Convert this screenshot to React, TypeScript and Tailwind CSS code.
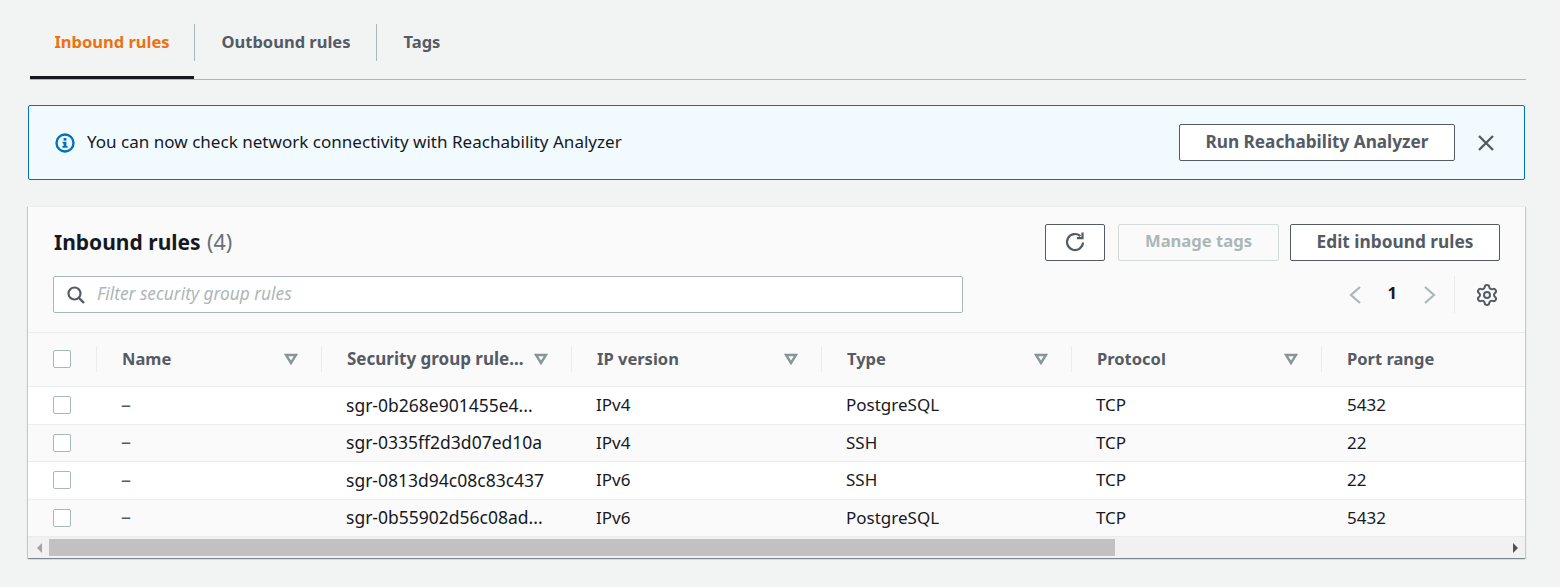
import { Settings } from "lucide-react";

const font = "font-['Noto_Sans',sans-serif]";

const columns = ["Name", "Security group rule...", "IP version", "Type", "Protocol", "Port range"];

const rows = [
  { id: "sgr-0b268e901455e4...", ip: "IPv4", type: "PostgreSQL", port: "5432" },
  { id: "sgr-0335ff2d3d07ed10a", ip: "IPv4", type: "SSH", port: "22" },
  { id: "sgr-0813d94c08c83c437", ip: "IPv6", type: "SSH", port: "22" },
  { id: "sgr-0b55902d56c08ad...", ip: "IPv6", type: "PostgreSQL", port: "5432" },
];

function Checkbox() {
  return <span className="block w-[18px] h-[18px] bg-white border border-[#aab7b8] rounded-[2px]" />;
}

function SortIcon() {
  return (
    <svg width="14" height="12" viewBox="0 0 14 12" className="shrink-0">
      <path d="M2 2h10L7 10z" fill="none" stroke="#879596" strokeWidth="2.4" strokeLinejoin="miter" />
    </svg>
  );
}

function Button({ children, className = "" }: { children: React.ReactNode; className?: string }) {
  return (
    <button className={`h-[37px] flex items-center justify-center bg-white border border-[#545b64] rounded-[2px] font-bold text-[#545b64] leading-[33px] pb-[2px] ${className}`}>
      {children}
    </button>
  );
}

export default function App() {
  return (
    <div className={`min-h-[587px] bg-[#f2f3f3] pt-[24px] pl-[28px] pr-[35px] overflow-hidden ${font}`}>
      {/* Tabs */}
      <div className="ml-[2px] mr-[-1px] h-[56px] flex border-b border-[#aab7b8] text-[16.5px] font-bold">
        <div className="relative w-[164px] h-[37px] flex items-center justify-center pb-px text-[#ec7211]">
          Inbound rules
          <span className="absolute left-0 right-0 top-[52px] h-[3px] bg-[#16191f]" />
        </div>
        <div className="w-[182px] h-[37px] flex items-center justify-center pl-[1px] pb-px border-l border-[#aab7b8] text-[#545b64]">
          Outbound rules
        </div>
        <div className="w-[91px] h-[37px] flex items-center justify-center pb-px border-l border-[#aab7b8] text-[#545b64]">
          Tags
        </div>
      </div>

      {/* Flash */}
      <div className="mt-[25px] h-[75px] flex items-center bg-[#f1faff] border border-[#0073bb] rounded-[2px] pl-[26px] pr-[29px]">
        <svg width="20" height="20" viewBox="0 0 20 20" className="shrink-0">
          <circle cx="10" cy="10" r="8.5" fill="none" stroke="#0073bb" strokeWidth="2.4" />
          <rect x="8.6" y="5" width="2.8" height="2.6" fill="#0073bb" />
          <path d="M7.6 8.8h3.8v4.2h1.2v1.8H7.4V13h1.2v-2.4h-1z" fill="#0073bb" />
        </svg>
        <span className="ml-[12px] pb-[2px] text-[17.06px] text-[#16191f]">You can now check network connectivity with Reachability Analyzer</span>
        <Button className="ml-auto w-[276px] text-[17.2px]">Run Reachability Analyzer</Button>
        <svg width="18" height="18" viewBox="0 0 18 18" className="ml-[22px] shrink-0">
          <path d="M2 2l14 14M16 2L2 16" stroke="#545b64" strokeWidth="2.4" />
        </svg>
      </div>

      {/* Table card */}
      <div className="mt-[26px] h-[352px] bg-[#fafafa] border-t border-[#eaeded] shadow-[0_1px_1px_0_rgba(0,28,36,0.3),1px_1px_1px_0_rgba(0,28,36,0.15),-1px_1px_1px_0_rgba(0,28,36,0.15)] overflow-hidden flex flex-col">
        <div className="h-[126px] shrink-0 pl-[25px] pr-[25px] border-b border-[#eaeded]">
          <div className="pt-[17px] flex items-start justify-between">
            <h2 className="pt-[4px] pl-[1px] text-[21px] leading-[28px] font-bold text-[#16191f]">
              Inbound rules <span className="ml-[1px] text-[21.5px] font-normal text-[#687078]">(4)</span>
            </h2>
            <div className="flex gap-[13px]">
              <Button className="w-[60px] pb-0">
                <svg width="24" height="24" viewBox="0 0 24 24">
                  <path d="M20 12.5a8 8 0 1 1-2.6-6.4" fill="none" stroke="#545b64" strokeWidth="2.2" />
                  <path d="M19.5 2.5v5.6h-5.6" fill="none" stroke="#545b64" strokeWidth="2.2" />
                </svg>
              </Button>
              <button className="h-[37px] w-[161px] pb-[2px] bg-[#fafafa] border border-[#d5dbdb] rounded-[2px] text-[16.6px] font-bold text-[#aab7b8]">Manage tags</button>
              <Button className="w-[210px] -ml-[2px] text-[17.3px]">Edit inbound rules</Button>
            </div>
          </div>
          <div className="mt-[15px] flex items-start">
            <div className="w-[910px] h-[37px] flex items-center bg-white border border-[#aab7b8] rounded-[2px] pl-[12px]">
              <svg width="20" height="20" viewBox="0 0 20 20" className="shrink-0">
                <circle cx="8.5" cy="8.5" r="6" fill="none" stroke="#545b64" strokeWidth="2.2" />
                <path d="M13 13l5 5" stroke="#545b64" strokeWidth="2.4" />
              </svg>
              <span className="ml-[11px] pb-[2px] text-[17.3px] italic text-[#aab7b8]">Filter security group rules</span>
            </div>
            <div className="ml-auto mr-px flex items-center h-[37px]">
              <svg width="14" height="20" viewBox="0 0 14 20">
                <path d="M12 2L3 10l9 8" fill="none" stroke="#aab7b8" strokeWidth="2.2" />
              </svg>
              <span className="mx-[26px] pb-[2px] text-[16.5px] font-bold text-[#16191f]">1</span>
              <svg width="14" height="20" viewBox="0 0 14 20">
                <path d="M2 2l9 8-9 8" fill="none" stroke="#aab7b8" strokeWidth="2.2" />
              </svg>
              <span className="ml-[17px] w-px h-[37px] bg-[#eaeded]" />
              <Settings size={24} strokeWidth={2} className="ml-[20px] text-[#545b64]" />
            </div>
          </div>
        </div>

        {/* Column header */}
        <div className="h-[54px] shrink-0 flex items-center border-b border-[#eaeded] pb-[1px]">
          <div className="w-[69px] shrink-0 h-[26px] flex items-center pl-[25px] border-r border-[#eaeded]">
            <Checkbox />
          </div>
          {columns.map((col, i) => (
            <div
              key={col}
              className={`${i === 0 ? "w-[225px]" : "w-[250px]"} shrink-0 h-[26px] flex items-center justify-between pl-[25px] pr-[23px] text-[16.5px] font-bold text-[#545b64] whitespace-nowrap ${i < 5 ? "border-r border-[#eaeded]" : ""}`}
            >
              <span className={i === 1 ? "text-[17px]" : ""}>{col}</span>
              {i < 5 && <SortIcon />}
            </div>
          ))}
        </div>

        {/* Rows */}
        {rows.map((row, i) => (
          <div key={row.id} className={`h-[37.5px] shrink-0 flex items-center pb-[1px] text-[17px] text-[#16191f] border-b border-[#eaeded] ${i % 2 === 0 ? "bg-white" : "bg-[#fafafa]"}`}>
            <div className="w-[69px] shrink-0 pl-[25px] pt-[1px]">
              <Checkbox />
            </div>
            <div className="w-[225px] shrink-0 pl-[24px] text-[20px] leading-[24px] text-[#545b64]">–</div>
            <div className="w-[250px] shrink-0 pl-[24px] whitespace-nowrap text-[17.5px]">{row.id}</div>
            <div className="w-[250px] shrink-0 pl-[24px]">{row.ip}</div>
            <div className="w-[250px] shrink-0 pl-[24px]">{row.type}</div>
            <div className="w-[250px] shrink-0 pl-[24px]">TCP</div>
            <div className="w-[200px] shrink-0 pl-[25px]">{row.port}</div>
          </div>
        ))}

        {/* Scrollbar */}
        <div className="flex-1 flex items-center bg-[#f1f1f1]">
          <svg width="8" height="10" viewBox="0 0 8 10" className="ml-[8px]">
            <path d="M6 0v10L1 5z" fill="#a3a3a3" />
          </svg>
          <div className="ml-[5px] w-[1066px] h-[17px] bg-[#c1c1c1]" />
          <svg width="8" height="10" viewBox="0 0 8 10" className="ml-auto mr-[6px]">
            <path d="M2 0v10l5-5z" fill="#505050" />
          </svg>
        </div>
      </div>
    </div>
  );
}
